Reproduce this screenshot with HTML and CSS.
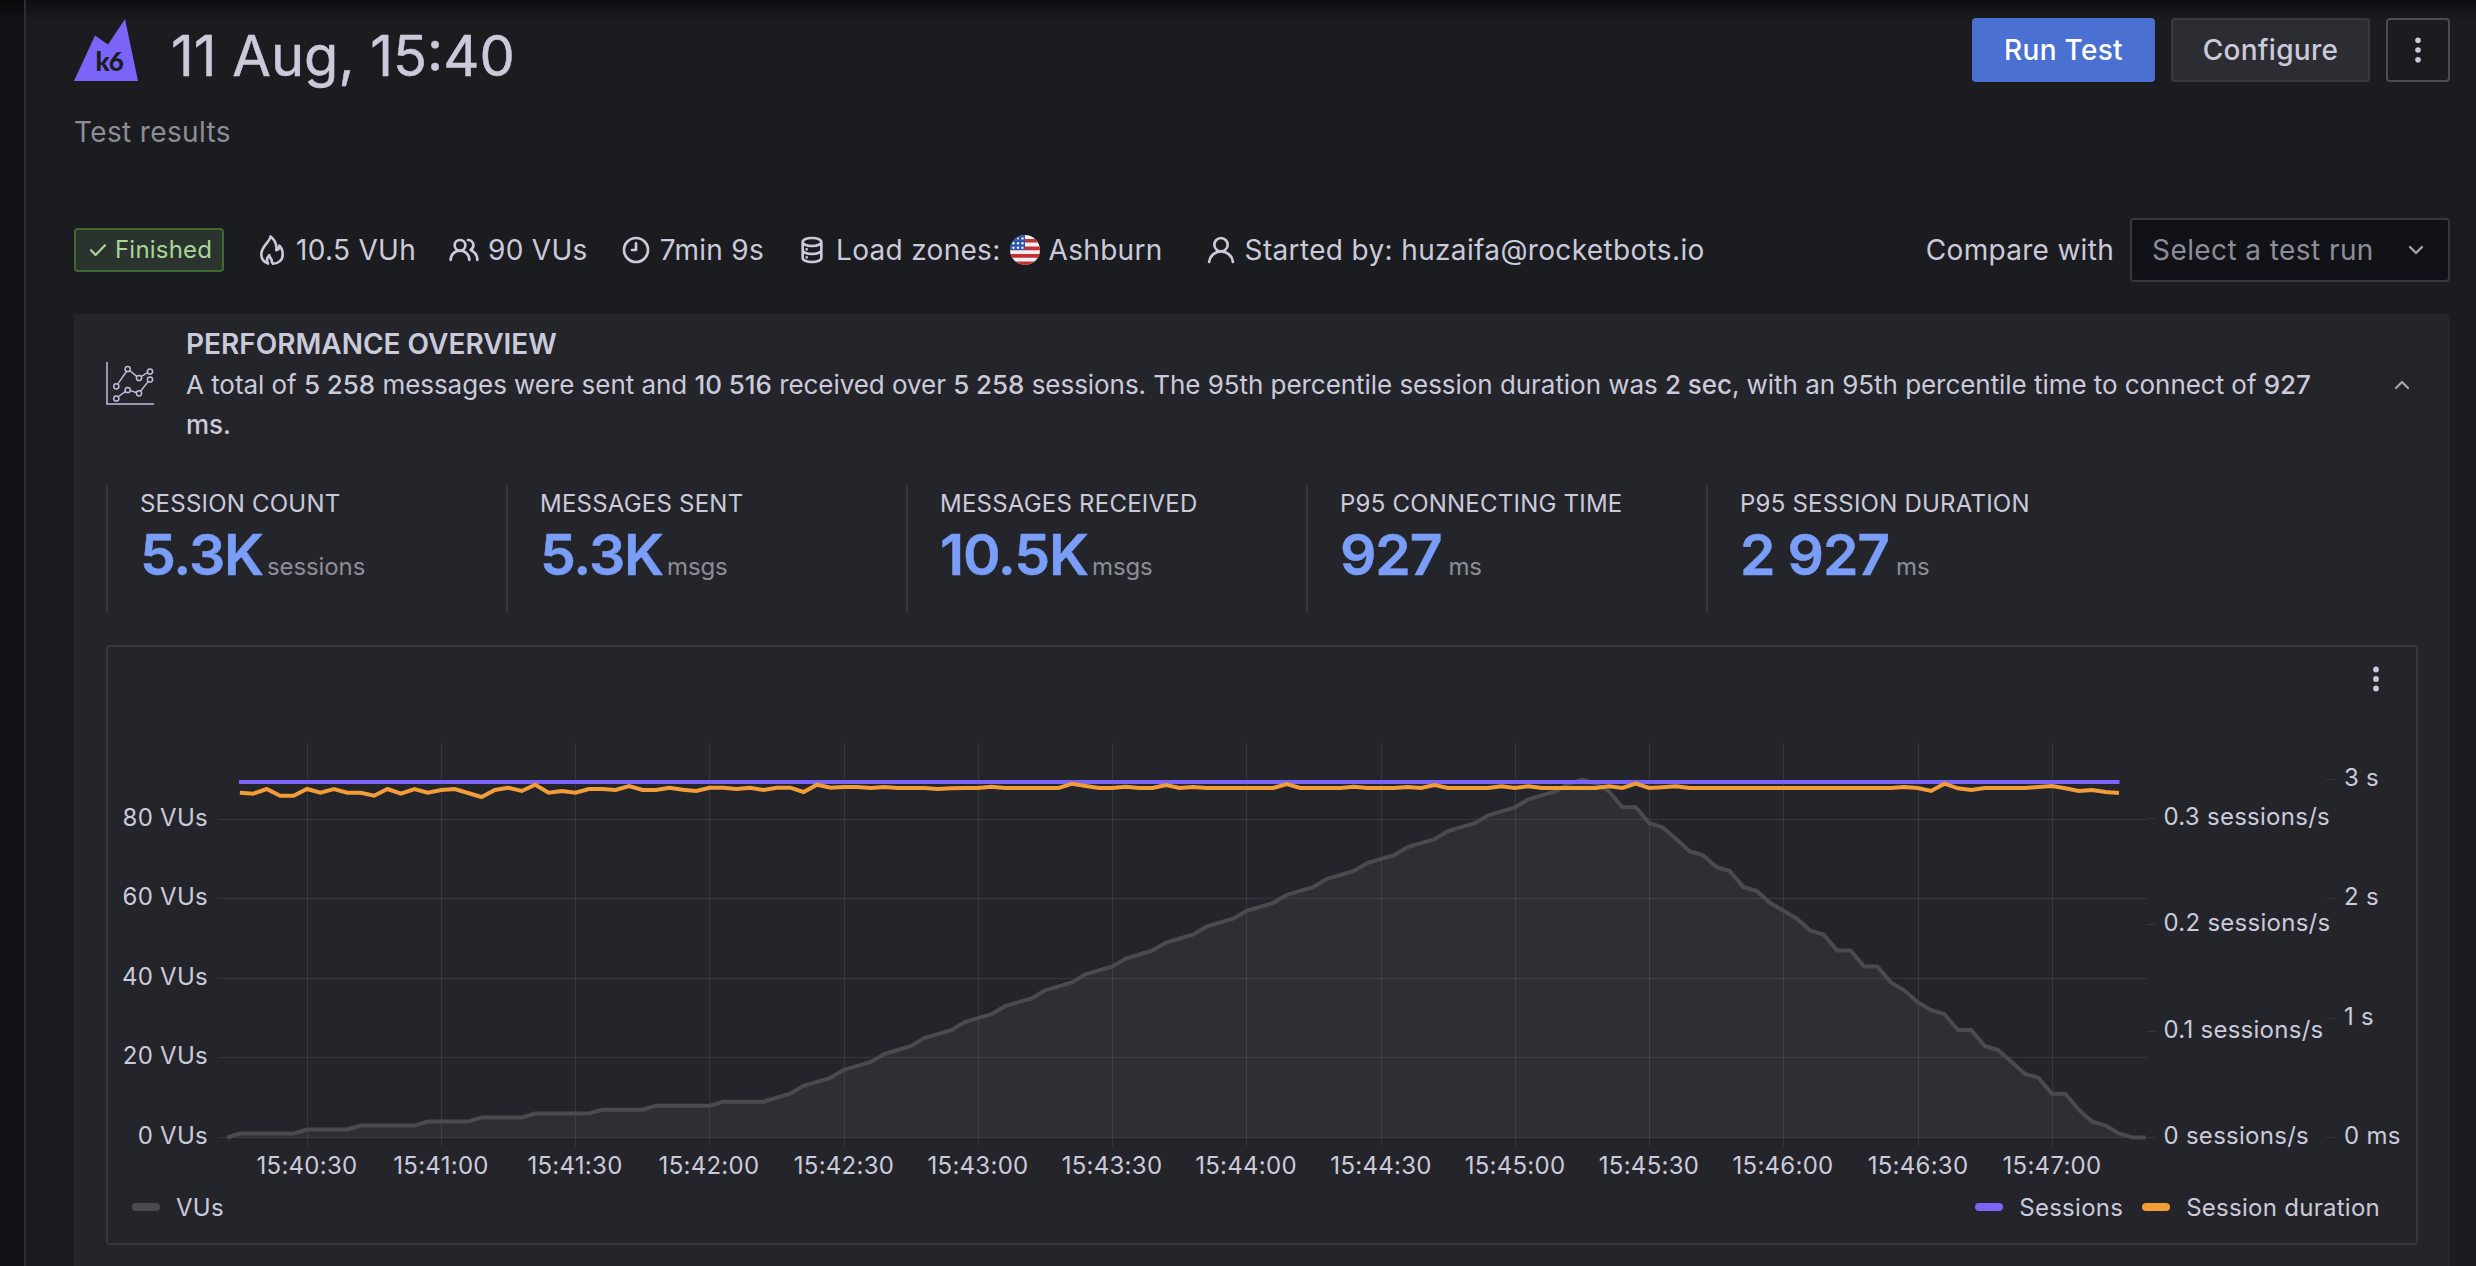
FILE: index.html
```html
<!DOCTYPE html>
<html lang="en">
<head>
<meta charset="utf-8">
<title>k6 test results</title>
<link rel="stylesheet" href="styles.css">
</head>
<body>
<div class="rail"></div>
<main class="page">
  <header class="page-header">
    <div>
      <div class="title-row">
        <svg class="logo" viewBox="0 0 64 62" width="64" height="62">
          <path d="M0 62 21 16.5 34 25.5 51 0 64 62Z" fill="#7b65f8"/>
          <text x="21.5" y="52" class="logo-text">k6</text>
        </svg>
        <h1 class="title">11 Aug, 15:40</h1>
      </div>
      <p class="subtitle">Test results</p>
    </div>
    <div class="actions">
      <button class="btn btn-primary">Run Test</button>
      <button class="btn btn-secondary">Configure</button>
      <button class="btn btn-icon" aria-label="More">
        <svg viewBox="0 0 32 32" width="32" height="32" fill="currentColor"><circle cx="16" cy="6.3" r="2.8"/><circle cx="16" cy="16" r="2.8"/><circle cx="16" cy="25.7" r="2.8"/></svg>
      </button>
    </div>
  </header>

  <section class="status">
    <span class="badge">
      <svg viewBox="0 0 18 14" width="18" height="14" fill="none" stroke="currentColor" stroke-width="2.2" stroke-linecap="round" stroke-linejoin="round"><path d="M2 7.2 6.6 12 16 2.2"/></svg>
      <span>Finished</span>
    </span>
    <span class="meta">
      <svg viewBox="0 0 32 32" width="32" height="32" fill="none" stroke="currentColor" stroke-width="2.6" stroke-linejoin="round"><path d="M14.6 2.4C13.800 8 5.300 12.500 5.300 20.300C5.300 24.400 7.800 28.200 12 29.600C10.500 26.600 11 23.300 13.300 21.200C13.500 24.600 16.400 24.600 15.800 28L17 29.700C22.500 29.700 26.700 26 26.700 20.400C26.700 16.500 25.500 13.600 23.300 11.700C23.300 14.300 22.200 15.800 20.300 16.200C21 11 18.800 5.800 14.600 2.400Z"/></svg>
      <span>10.5 VUh</span>
    </span>
    <span class="meta">
      <svg viewBox="0 0 24 24" width="32" height="32" fill="currentColor"><path d="M12.3,12.22A4.92,4.92,0,0,0,14,8.5a5,5,0,0,0-10,0,4.92,4.92,0,0,0,1.7,3.72A8,8,0,0,0,1,19.5a1,1,0,0,0,2,0,6,6,0,0,1,12,0,1,1,0,0,0,2,0A8,8,0,0,0,12.3,12.22ZM9,11.5a3,3,0,1,1,3-3A3,3,0,0,1,9,11.5Zm9.74.32A5,5,0,0,0,15,3.5a1,1,0,0,0,0,2,3,3,0,0,1,3,3,3,3,0,0,1-1.5,2.59,1,1,0,0,0-.5.84,1,1,0,0,0,.45.86l.39.26.13.07a7,7,0,0,1,4,6.38,1,1,0,0,0,2,0A9,9,0,0,0,18.74,11.820Z"/></svg>
      <span>90 VUs</span>
    </span>
    <span class="meta">
      <svg viewBox="0 0 24 24" width="32" height="32"><circle cx="12" cy="12" r="9" fill="none" stroke="currentColor" stroke-width="2"/><path fill="currentColor" d="M11,7v4H9a1,1,0,0,0,0,2h3a1,1,0,0,0,1-1V7a1,1,0,0,0-2,0Z"/></svg>
      <span>7min 9s</span>
    </span>
    <span class="meta">
      <svg viewBox="0 0 24 24" width="32" height="32" fill="currentColor"><path d="M8,16.5a1,1,0,1,0,1,1A1,1,0,0,0,8,16.5ZM12,2C8,2,4,3.37,4,6V18c0,2.63,4,4,8,4s8-1.37,8-4V6C20,3.37,16,2,12,2Zm6,16c0,.71-2.28,2-6,2s-6-1.29-6-2V14.73A13.16,13.16,0,0,0,12,16a13.16,13.16,0,0,0,6-1.27Zm0-6c0,.71-2.28,2-6,2s-6-1.29-6-2V8.73A13.16,13.16,0,0,0,12,10a13.16,13.16,0,0,0,6-1.27ZM12,8C8.28,8,6,6.71,6,6s2.28-2,6-2,6,1.29,6,2S15.72,8,12,8ZM8,10.5a1,1,0,1,0,1,1A1,1,0,0,0,8,10.5Z"/></svg>
      <span>Load zones:</span>
      <svg class="flag" viewBox="0 0 30 30" width="30" height="30">
        <clipPath id="disc"><circle cx="15" cy="15" r="15"/></clipPath>
        <g clip-path="url(#disc)">
          <path fill="#f1eff0" d="M0 0h30v30H0z"/>
          <path fill="#c62f35" d="M0 4h30v3.600H0zM0 11.600h30v3.600H0zM0 19h30v3.700H0zM0 26.400h30V30H0z"/>
          <path fill="#2a55ae" d="M0 0h15v15H0z"/>
          <g fill="#f1eff0"><circle cx="8" cy="3.500" r="1"/><circle cx="12.500" cy="3.500" r="1.200"/><circle cx="3.500" cy="8.200" r="1.200"/><circle cx="8" cy="8.200" r="1.200"/><circle cx="12.500" cy="8.200" r="1.200"/><circle cx="3.500" cy="12.800" r="1.200"/><circle cx="8" cy="12.800" r="1.200"/><circle cx="12.500" cy="12.800" r="1.200"/></g>
        </g>
      </svg>
      <span>Ashburn</span>
    </span>
    <span class="meta meta-user">
      <svg viewBox="0 0 24 24" width="32" height="32" fill="currentColor"><path d="M15.71,12.71a6,6,0,1,0-7.42,0,10,10,0,0,0-6.22,8.18,1,1,0,0,0,2,.22,8,8,0,0,1,15.9,0,1,1,0,0,0,1,.89h.11a1,1,0,0,0,.88-1.1A10,10,0,0,0,15.71,12.71ZM12,12a4,4,0,1,1,4-4A4,4,0,0,1,12,12Z"/></svg>
      <span>Started by: huzaifa@rocketbots.io</span>
    </span>
    <div class="compare">
      <span>Compare with</span>
      <div class="select">
        <span>Select a test run</span>
        <svg viewBox="0 0 16 10" width="16" height="10" fill="none" stroke="#a6a6b3" stroke-width="2.300" stroke-linecap="round" stroke-linejoin="round"><path d="M2 2 8 8 14 2"/></svg>
      </div>
    </div>
  </section>

  <section class="panel">
    <div class="overview">
      <svg class="overview-icon" viewBox="0 0 48 43" width="48" height="43" fill="none" stroke="#c0badb" stroke-width="1.500">
        <path d="M1 0V42H48"/>
        <path d="M12 21.600 20.300 9.700M23.700 8.500 30.700 14.300M35.300 14.300 41.700 10.700M12.500 34.500 19.300 29.700M24.200 28.600 30.200 30.500M34.700 29 42.300 19.400"/>
        <circle cx="10.300" cy="24.300" r="2.600"/><circle cx="21.700" cy="7" r="2.600"/><circle cx="33" cy="16" r="2.600"/><circle cx="44" cy="9.500" r="2.600"/>
        <circle cx="10.300" cy="36.500" r="2.600"/><circle cx="21.700" cy="28" r="2.600"/><circle cx="33" cy="31.300" r="2.600"/><circle cx="44" cy="17.500" r="2.600"/>
      </svg>
      <div class="overview-text">
        <h2>PERFORMANCE OVERVIEW</h2>
        <p>A total of <b>5 258</b> messages were sent and <b>10 516</b> received over <b>5 258</b> sessions. The 95th percentile session duration was <b>2 sec</b>, with an 95th percentile time to connect of <b>927 ms.</b></p>
      </div>
      <svg class="collapse" viewBox="0 0 16 10" width="16" height="10" fill="none" stroke="#a6a6b3" stroke-width="2.200" stroke-linecap="round" stroke-linejoin="round"><path d="M2 8 8 2 14 8"/></svg>
    </div>

    <div class="stats">
      <div class="stat"><div class="stat-label">SESSION COUNT</div><div class="stat-value"><b>5.3K</b><span>sessions</span></div></div>
      <div class="stat"><div class="stat-label">MESSAGES SENT</div><div class="stat-value"><b>5.3K</b><span>msgs</span></div></div>
      <div class="stat"><div class="stat-label">MESSAGES RECEIVED</div><div class="stat-value"><b>10.5K</b><span>msgs</span></div></div>
      <div class="stat"><div class="stat-label">P95 CONNECTING TIME</div><div class="stat-value"><b>927</b><span class="spaced">ms</span></div></div>
      <div class="stat"><div class="stat-label">P95 SESSION DURATION</div><div class="stat-value"><b>2 927</b><span class="spaced">ms</span></div></div>
    </div>

    <div class="chart">
      <div class="chart-menu">
        <svg viewBox="0 0 8 26" width="8" height="26" fill="#cbcadb"><circle cx="4" cy="3.500" r="2.900"/><circle cx="4" cy="13" r="2.900"/><circle cx="4" cy="22.500" r="2.900"/></svg>
      </div>
      <svg class="plot" id="plot" viewBox="108 712 2308 474" width="2308" height="474"></svg>
      <div class="legend">
        <span class="key key-vus"><i></i><span>VUs</span></span>
        <span class="key key-sessions"><i></i><span>Sessions</span></span>
        <span class="key key-duration"><i></i><span>Session duration</span></span>
      </div>
    </div>
  </section>
</main>
<script src="chart.js"></script>
</body>
</html>
```
FILE: styles.css
```css
* { box-sizing: border-box; }
body {
  margin: 0;
  height: 1266px;
  overflow: hidden;
  display: flex;
  background: linear-gradient(#0c0d0f, rgba(12, 13, 15, 0) 20px) #1b1c1f;
  color: #cbcadb;
  font-family: Inter, "Liberation Sans", sans-serif;
  font-size: 28px;
  letter-spacing: 0.3px;
}
h1, h2, p { margin: 0; font-weight: 400; }
svg { display: block; flex: none; }

.rail { flex: none; width: 26px; background: linear-gradient(#08080a, rgba(8, 8, 10, 0) 20px) #111217; border-right: 2px solid #2d2e32; }
.page { flex: 1; min-width: 0; padding: 18px 26px 0 48px; }

.page-header { display: flex; justify-content: space-between; align-items: flex-start; height: 134px; }
.title-row { display: flex; align-items: flex-start; gap: 33px; height: 74px; }
.logo { margin-top: 1px; }
.logo-text { font: 900 26px Lato, sans-serif; letter-spacing: -1px; fill: #1b1c1f; }
.title { font-size: 56px; line-height: 76px; letter-spacing: 0; -webkit-text-stroke: 0.5px currentColor; }
.subtitle { margin-top: 20px; line-height: 40px; letter-spacing: 0.35px; color: #8d8d98; }
.actions { display: flex; gap: 16px; }
.btn { height: 64px; padding: 0; border: 2px solid transparent; border-radius: 4px; font: 500 28px Inter, sans-serif; letter-spacing: 0.3px; color: #cbcadb; display: flex; align-items: center; justify-content: center; }
.btn-primary { width: 183px; background: #4a70d2; color: #fff; }
.btn-secondary { width: 199px; background: #2c2d32; border-color: #38393e; }
.btn-icon { width: 64px; background: none; border-color: #4b4c54; }

.status { display: flex; align-items: center; height: 64px; margin-top: 66px; gap: 32px; }
.badge { display: flex; align-items: center; gap: 8px; width: 150px; height: 44px; padding: 0 0 1px 13px; border: 2px solid #3f6933; border-radius: 4px; background: #2b332e; color: #a9d59a; font-size: 24px; letter-spacing: 0.2px; white-space: nowrap; }
.meta { display: flex; align-items: center; gap: 8px; white-space: nowrap; }
.flag { margin: 0 1px 0 1px; }
.meta-user { margin-left: 10px; letter-spacing: 0.35px; }
.compare { display: flex; align-items: center; gap: 16px; margin-left: auto; white-space: nowrap; }
.select { display: flex; align-items: center; justify-content: space-between; width: 320px; height: 64px; padding: 0 24px 0 20px; border: 2px solid #37383d; border-radius: 4px; background: #111217; color: #8d8d98; letter-spacing: 0.42px; }

.panel { margin-top: 32px; padding: 10px 32px 0; height: 960px; background: #24252a; }
.overview { display: flex; align-items: center; gap: 32px; height: 121px; }
.overview-icon { margin-top: -3px; }
.overview-text { flex: 1; }
.overview h2 { font-size: 28px; font-weight: 600; line-height: 41px; letter-spacing: 0; }
.overview p { font-size: 26px; line-height: 40px; letter-spacing: -0.05px; }
.overview b { font-weight: 500; }
.collapse { margin: 0 8px; }

.stats { display: flex; margin-top: 40px; height: 128px; }
.stat { width: 400px; padding: 7px 0 0 32px; border-left: 2px solid #36373c; }
.stat-label { font-size: 24px; line-height: 24px; letter-spacing: 0.22px; white-space: nowrap; }
.stat-value { display: flex; align-items: baseline; gap: 4px; line-height: 77px; }
.stat-value b { font-size: 57px; font-weight: 600; color: #7a9df8; letter-spacing: -1.15px; -webkit-text-stroke: 0.5px currentColor; }
.stat-value span { font-size: 24px; letter-spacing: -0.1px; color: #8d8d98; }
.stat-value .spaced { margin-left: 3px; }

.chart { display: flex; flex-direction: column; width: 2312px; height: 600px; margin-top: 32px; border: 2px solid #36373c; border-radius: 4px; }
.chart-menu { display: flex; justify-content: flex-end; height: 65px; padding: 19px 36px 0 0; }
.plot text { fill: #cbcadb; font-size: 24px; letter-spacing: 0.27px; }
.plot .grid { stroke: #cccdda; stroke-opacity: 0.11; stroke-width: 1; shape-rendering: crispEdges; }
.plot .area { fill: #2e2f32; }
.plot .series { fill: none; stroke-width: 4; }
.plot .vus { stroke: #4a4b4e; }
.plot .sessions { stroke: #7b65f8; }
.plot .duration { stroke: #f29d38; }
.legend { display: flex; align-items: center; height: 42px; padding: 0 36px 0 24px; font-size: 24px; letter-spacing: 0.27px; }
.key { display: flex; align-items: center; gap: 16px; }
.key i { width: 28px; height: 8px; border-radius: 4px; }
.key-vus { margin-right: auto; }
.key-vus i { background: #4a4b4e; }
.key-sessions i { background: #7b65f8; }
.key-duration { margin-left: 19px; }
.key-duration i { background: #f29d38; }
```
FILE: chart.js
```js
// One sample every three seconds.
const STEP = 13.422;
const BASE = 1137.5;
const x = i => 239.9 + STEP * i;

const vus = [0, 1, 1, 1, 1, 1, 2, 2, 2, 2, 3, 3, 3, 3, 3, 4, 4, 4, 4, 5, 5, 5, 5, 6, 6, 6, 6, 6, 7, 7, 7, 7,
  8, 8, 8, 8, 8, 9, 9, 9, 9, 10, 11, 13, 14, 15, 17, 18, 19, 21, 22, 23, 25, 26, 27, 29, 30, 31, 33, 34, 35,
  37, 38, 39, 41, 42, 43, 45, 46, 47, 49, 50, 51, 53, 54, 55, 57, 58, 59, 61, 62, 63, 65, 66, 67, 69, 70, 71,
  73, 74, 75, 77, 78, 79, 81, 82, 83, 85, 86, 87, 89, 90, 89, 87, 83, 83, 79, 78, 75, 72, 71, 68, 67, 63, 62,
  59, 57, 55, 52, 51, 47, 47, 43, 43, 39, 37, 34, 32, 31, 27, 27, 23, 22, 19, 16, 15, 11, 11, 7, 4, 3, 1, 0, 0];

// Vertical offset of the session duration line, thirds of a pixel below y = 730.
const duration = Array(141).fill(174);
[188, 191, 177, 197, 197, 177, 188, 177, 188, 188, 197, 177, 191, 177, 188, 180, 177, 189, 201, 180, 173, 183,
  164, 188, 183, 188, 177, 177, 180, 168, 180, 180, 173, 179, 183, 173, 173, 177, 173, 180, 173, 173, 186, 164,
  173, 171, 171, 174, 171, 174, 174, 174, 177, 175].forEach((v, i) => { duration[i] = v; });
Object.entries({ 56: 170, 62: 161, 63: 168, 66: 170, 69: 165, 71: 171, 78: 162, 83: 170, 87: 171, 89: 165,
  94: 169, 96: 169, 102: 169, 104: 161, 106: 172, 107: 169, 124: 171, 126: 183, 127: 161, 128: 175, 129: 180,
  134: 171, 135: 168, 136: 175, 137: 183, 138: 180, 139: 186, 140: 189 }).forEach(([i, v]) => { duration[i] = v; });

const path = points => 'M' + points.map(p => p[0].toFixed(1) + ' ' + p[1].toFixed(1)).join('L');
const vusPoints = vus.map((v, i) => [i ? x(i - 1) : 227, BASE - v * 3.978]);
const durationPoints = duration.map((v, i) => [x(i), 730 + v / 3]);

const out = [];
const line = (x1, y1, x2, y2) => out.push(`<path class="grid" d="M${x1} ${y1}L${x2} ${y2}"/>`);
const label = (tx, ty, s, anchor) => out.push(`<text x="${tx}" y="${ty}" text-anchor="${anchor}">${s}</text>`);

out.push(`<path class="area" d="${path(vusPoints)}L2147 ${BASE}L227 ${BASE}Z"/>`);
[1137.5, 1057.5, 978.5, 898.5, 819.5].forEach((y, i) => {
  line(218, y, 2147, y);
  label(208, y + 6, `${i * 20} VUs`, 'end');
});
[307, 441, 575, 709, 844, 978, 1112, 1246, 1381, 1515, 1649, 1783, 1918, 2052].forEach((gx, i) => {
  line(gx + 0.5, 743, gx + 0.5, 1146);
  const m = 40 + Math.floor((i + 1) / 2);
  label(gx, 1174, `15:${m}:${i % 2 ? '00' : '30'}`, 'middle');
});
[[1137.5, '0'], [1031.5, '0.1'], [924.5, '0.2'], [818.5, '0.3']].forEach(([y, n]) => {
  line(2147, y, 2155, y);
  label(2163.5, y + 6.5, `${n} sessions/s`, 'start');
});
[[1137.5, '0 ms'], [1018.5, '1 s'], [898.5, '2 s'], [779.5, '3 s']].forEach(([y, s]) => {
  line(2326, y, 2335, y);
  label(2344, y + 6.5, s, 'start');
});
out.push(`<path class="series vus" d="${path(vusPoints)}"/>`);
out.push('<path class="series sessions" d="M239 782H2119.500"/>');
out.push(`<path class="series duration" d="${path(durationPoints)}"/>`);
document.getElementById('plot').innerHTML = out.join('');
```
